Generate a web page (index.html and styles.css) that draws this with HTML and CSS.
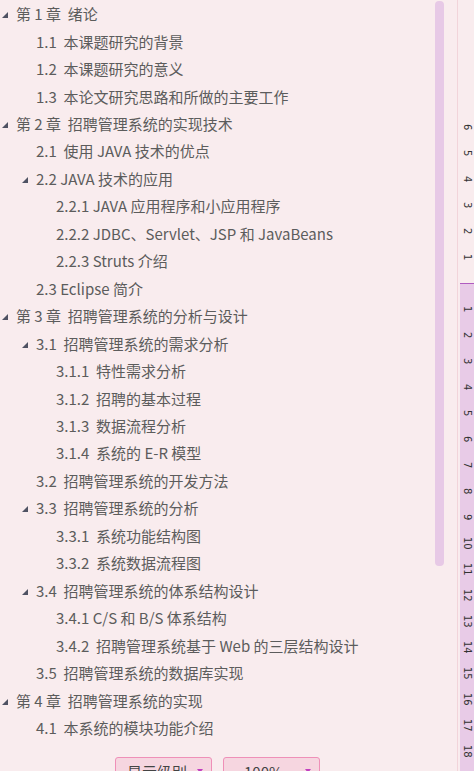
FILE: index.html
```html
<!DOCTYPE html>
<html lang="zh-CN">
<head>
<meta charset="utf-8">
<title>导航</title>
<link rel="stylesheet" href="styles.css">
</head>
<body>
<div class="app">
  <div class="nav">
    <div class="scroll">
      <ul class="toc">
        <li class="row l1"><span class="tri"><svg viewBox="0 0 6 6" width="6" height="6"><polygon points="6,0 6,6 0,6"/></svg></span>第 1 章&nbsp;&nbsp;绪论</li>
        <li class="row l2">1.1&nbsp;&nbsp;本课题研究的背景</li>
        <li class="row l2">1.2&nbsp;&nbsp;本课题研究的意义</li>
        <li class="row l2">1.3&nbsp;&nbsp;本论文研究思路和所做的主要工作</li>
        <li class="row l1"><span class="tri"><svg viewBox="0 0 6 6" width="6" height="6"><polygon points="6,0 6,6 0,6"/></svg></span>第 2 章&nbsp;&nbsp;招聘管理系统的实现技术</li>
        <li class="row l2">2.1&nbsp;&nbsp;使用 JAVA 技术的优点</li>
        <li class="row l2"><span class="tri"><svg viewBox="0 0 6 6" width="6" height="6"><polygon points="6,0 6,6 0,6"/></svg></span>2.2 JAVA 技术的应用</li>
        <li class="row l3">2.2.1 JAVA 应用程序和小应用程序</li>
        <li class="row l3">2.2.2 JDBC、Servlet、JSP 和 JavaBeans</li>
        <li class="row l3">2.2.3 Struts 介绍</li>
        <li class="row l2">2.3 Eclipse 简介</li>
        <li class="row l1"><span class="tri"><svg viewBox="0 0 6 6" width="6" height="6"><polygon points="6,0 6,6 0,6"/></svg></span>第 3 章&nbsp;&nbsp;招聘管理系统的分析与设计</li>
        <li class="row l2"><span class="tri"><svg viewBox="0 0 6 6" width="6" height="6"><polygon points="6,0 6,6 0,6"/></svg></span>3.1&nbsp;&nbsp;招聘管理系统的需求分析</li>
        <li class="row l3">3.1.1&nbsp;&nbsp;特性需求分析</li>
        <li class="row l3">3.1.2&nbsp;&nbsp;招聘的基本过程</li>
        <li class="row l3">3.1.3&nbsp;&nbsp;数据流程分析</li>
        <li class="row l3">3.1.4&nbsp;&nbsp;系统的 E-R 模型</li>
        <li class="row l2">3.2&nbsp;&nbsp;招聘管理系统的开发方法</li>
        <li class="row l2"><span class="tri"><svg viewBox="0 0 6 6" width="6" height="6"><polygon points="6,0 6,6 0,6"/></svg></span>3.3&nbsp;&nbsp;招聘管理系统的分析</li>
        <li class="row l3">3.3.1&nbsp;&nbsp;系统功能结构图</li>
        <li class="row l3">3.3.2&nbsp;&nbsp;系统数据流程图</li>
        <li class="row l2"><span class="tri"><svg viewBox="0 0 6 6" width="6" height="6"><polygon points="6,0 6,6 0,6"/></svg></span>3.4&nbsp;&nbsp;招聘管理系统的体系结构设计</li>
        <li class="row l3">3.4.1 C/S 和 B/S 体系结构</li>
        <li class="row l3">3.4.2&nbsp;&nbsp;招聘管理系统基于 Web 的三层结构设计</li>
        <li class="row l2">3.5&nbsp;&nbsp;招聘管理系统的数据库实现</li>
        <li class="row l1"><span class="tri"><svg viewBox="0 0 6 6" width="6" height="6"><polygon points="6,0 6,6 0,6"/></svg></span>第 4 章&nbsp;&nbsp;招聘管理系统的实现</li>
        <li class="row l2">4.1&nbsp;&nbsp;本系统的模块功能介绍</li>
      </ul>
      <div class="vbar"><div class="thumb"></div></div>
    </div>
    <div class="footer">
      <div class="btn btn-level"><span class="label">显示级别</span><span class="arrow"></span></div>
      <div class="btn btn-zoom"><span class="label">100%</span><span class="arrow"></span></div>
    </div>
  </div>
  <div class="sep"></div>
  <div class="ruler">
    <div class="r-top">
      <span class="n">6</span><span class="n">5</span><span class="n">4</span><span class="n">3</span><span class="n">2</span><span class="n">1</span>
    </div>
    <div class="r-bottom">
      <span class="n">1</span><span class="n">2</span><span class="n">3</span><span class="n">4</span><span class="n">5</span><span class="n">6</span><span class="n">7</span><span class="n">8</span><span class="n">9</span><span class="n">10</span><span class="n">11</span><span class="n">12</span><span class="n">13</span><span class="n">14</span><span class="n">15</span><span class="n">16</span><span class="n">17</span><span class="n">18</span>
    </div>
  </div>
</div>
</body>
</html>
```

FILE: styles.css
```css
html, body {
  margin: 0;
  padding: 0;
}
body {
  width: 474px;
  height: 771px;
  overflow: hidden;
  background: #f9ecee;
  font-family: "Noto Sans CJK SC", "Noto Sans", sans-serif;
}
.app {
  display: flex;
  height: 771px;
  overflow: hidden;
}
.nav {
  width: 457px;
  display: flex;
  flex-direction: column;
}
.scroll {
  display: flex;
  flex: none;
  height: 745px;
  overflow: hidden;
}
.toc {
  list-style: none;
  margin: 0;
  padding: 0;
  width: 435px;
}
.row {
  height: 27.46px;
  display: flex;
  align-items: center;
  font-size: 15px;
  color: #5c5c5c;
  white-space: nowrap;
}
.l1 { padding-left: 16px; }
.l2 { padding-left: 36px; }
.l3 { padding-left: 56px; }
.tri {
  display: flex;
  width: 6px;
  height: 6px;
  margin-left: -14px;
  margin-right: 8px;
  margin-top: 3px;
}
.tri svg { fill: #4f5263; }
.vbar {
  width: 22px;
  padding-top: 1px;
}
.thumb {
  width: 9px;
  height: 565px;
  background: #e7c9e6;
  border-radius: 4px;
}
.footer {
  flex: none;
  width: 435px;
  display: flex;
  justify-content: center;
  gap: 11px;
  padding-top: 12px;
}
.btn {
  box-sizing: border-box;
  width: 97px;
  height: 28px;
  border: 1px solid #ef90b8;
  border-radius: 3px;
  background: #f6d6e0;
  display: flex;
  align-items: center;
  font-size: 15px;
  color: #444;
  position: relative;
}
.btn-level .label { padding-left: 11px; }
.btn-zoom .label { padding-left: 20px; }
.arrow {
  position: absolute;
  right: 8px;
  top: 11px;
  width: 0;
  height: 0;
  border-left: 3px solid transparent;
  border-right: 3px solid transparent;
  border-top: 4px solid #c23fbf;
}
.sep {
  width: 1px;
  background: #f2d4da;
  margin-right: 2px;
}
.ruler {
  width: 14px;
  display: flex;
  flex-direction: column;
}
.r-top {
  height: 283px;
  flex: none;
  box-sizing: border-box;
  padding-bottom: 13px;
  display: flex;
  flex-direction: column;
  justify-content: flex-end;
  background: #f9ecee;
}
.r-bottom {
  flex: 1;
  border-top: 1px solid #b05cc0;
  padding-top: 12px;
  background: #e8cbe7;
  display: flex;
  flex-direction: column;
}
.n {
  height: 26px;
  flex: none;
  display: flex;
  align-items: center;
  justify-content: center;
  font-family: "DejaVu Sans", sans-serif;
  font-size: 10px;
  color: #333;
  writing-mode: vertical-rl;
}
```
